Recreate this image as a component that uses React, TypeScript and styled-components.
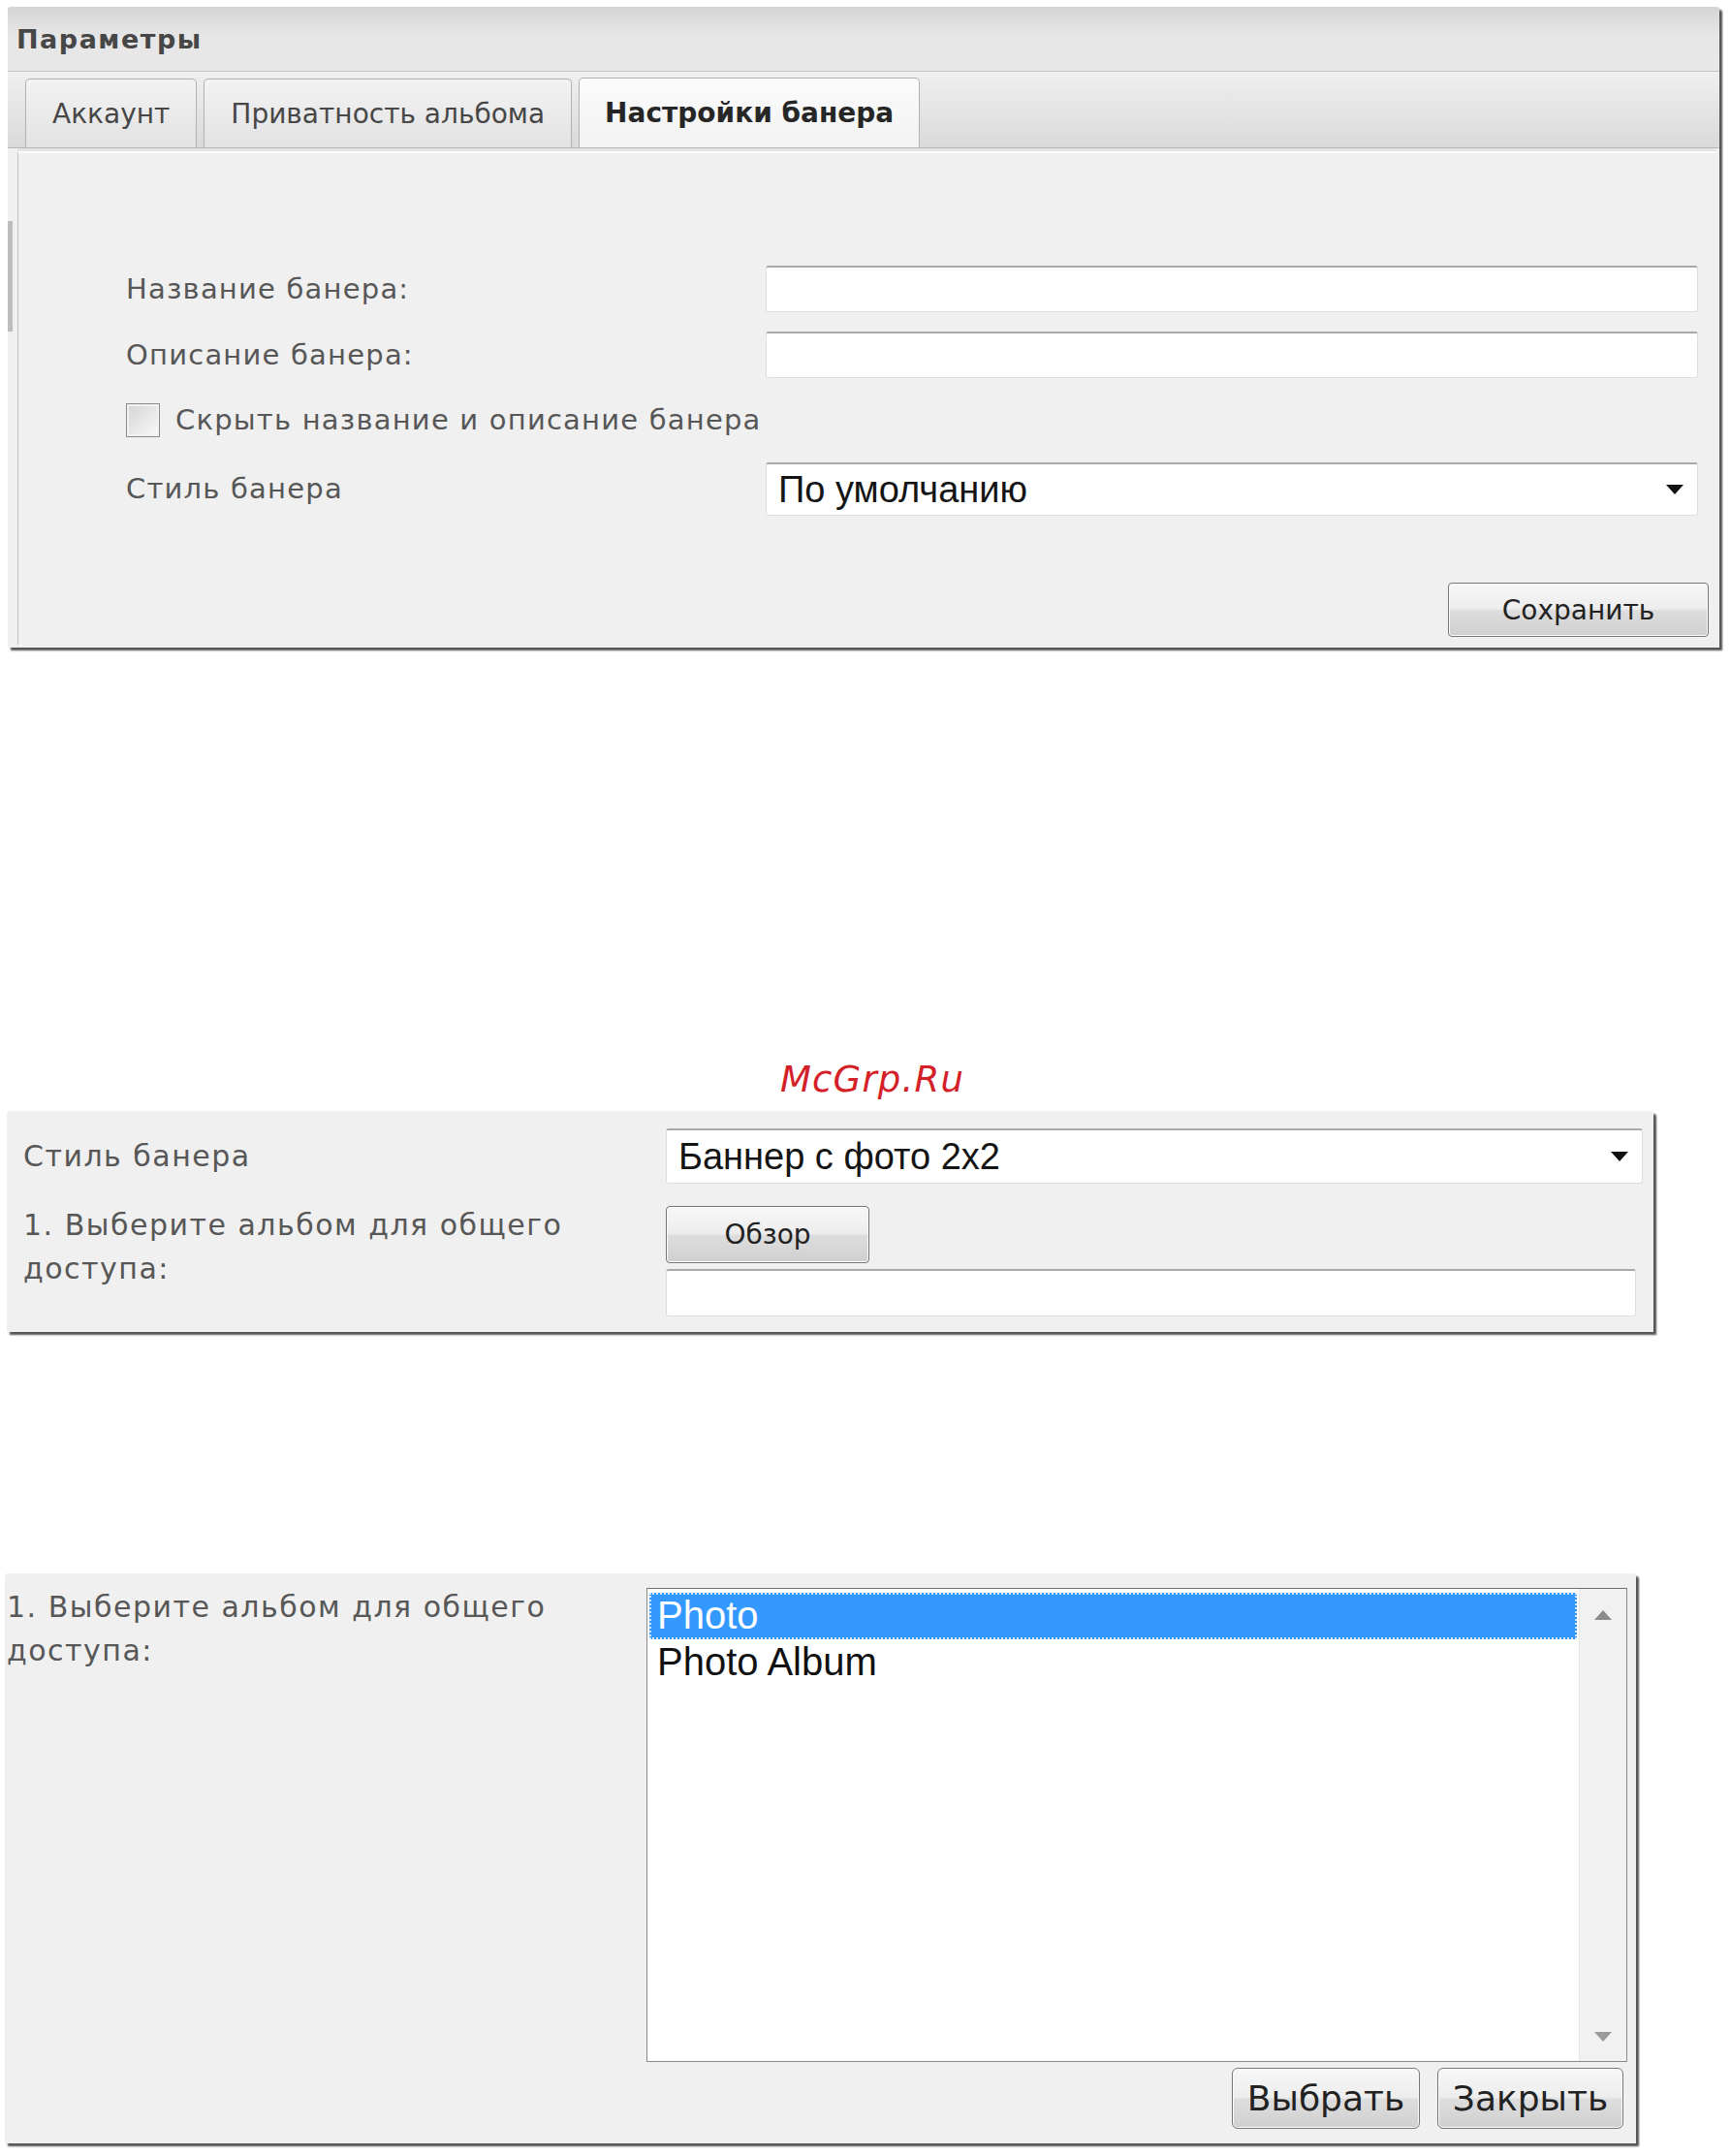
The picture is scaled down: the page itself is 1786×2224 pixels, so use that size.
import React from 'react';
import styled, { createGlobalStyle } from 'styled-components';

const GlobalStyle = createGlobalStyle`
  body {
    margin: 0;
    background: #fff;
    font-family: "DejaVu Sans", "Noto Sans", sans-serif;
  }
`;

const Page = styled.div`
  width: 1786px;
  min-height: 2224px;
  display: flex;
  flex-direction: column;
`;

const Window = styled.section<{ $left: number; $top: number; $width: number; $height: number }>`
  margin-left: ${(p) => p.$left}px;
  margin-top: ${(p) => p.$top}px;
  width: ${(p) => p.$width}px;
  height: ${(p) => p.$height}px;
  box-sizing: border-box;
  background: #f0f0f0;
  border-radius: 3px 3px 0 0;
  box-shadow: 3px 3px 2px rgba(40, 40, 40, 0.8);
  display: flex;
  flex-direction: column;
`;

/* ---------- panel 1: header + tabs ---------- */

const Header = styled.div`
  height: 67px;
  box-sizing: border-box;
  padding-left: 9px;
  display: flex;
  align-items: center;
  background: linear-gradient(#d5d5d5, #e6e6e6 45%, #e8e8e8);
  border-bottom: 1px solid #c4c4c4;
  border-radius: 3px 3px 0 0;
  font-size: 27px;
  font-weight: bold;
  letter-spacing: 1.5px;
  color: #474747;
`;

const TabStrip = styled.div`
  height: 79px;
  box-sizing: border-box;
  padding-left: 18px;
  display: flex;
  align-items: flex-end;
  gap: 7px;
  background: linear-gradient(#efefef, #dadada);
  border-bottom: 1px solid #b6b6b6;
`;

const Tab = styled.div<{ $active?: boolean }>`
  height: ${(p) => (p.$active ? 72 : 71)}px;
  box-sizing: border-box;
  padding: 0 ${(p) => (p.$active ? 26 : 27)}px;
  display: flex;
  align-items: center;
  border: 1px solid #b2b2b2;
  border-bottom: none;
  border-radius: 5px 5px 0 0;
  background: ${(p) =>
    p.$active ? 'linear-gradient(#fbfbfb, #f2f2f2)' : 'linear-gradient(#f3f3f3, #e2e2e2)'};
  font-size: 28px;
  font-weight: ${(p) => (p.$active ? 'bold' : 'normal')};
  color: ${(p) => (p.$active ? '#262626' : '#474747')};
`;

const TabBody = styled.div`
  position: relative;
  flex: 1;
  margin: 3px 3px 3px 10px;
  border-left: 1px solid #c2c2c2;
  border-top: 2px solid #fbfbfb;
  box-shadow: 0 -3px 0 #e4e4e4;
  padding: 116px 0 0 111px;
  display: flex;
  flex-direction: column;

  &::before {
    content: '';
    position: absolute;
    left: -11px;
    top: 70px;
    width: 5px;
    height: 114px;
    background: #bdbdbd;
  }
`;

const FormRow = styled.div<{ $height: number; $gap?: number }>`
  display: grid;
  grid-template-columns: 660px 962px;
  align-items: center;
  height: ${(p) => p.$height}px;
  margin-top: ${(p) => p.$gap ?? 0}px;
`;

const Label = styled.div<{ $size?: number }>`
  font-size: ${(p) => p.$size ?? 29}px;
  letter-spacing: ${(p) => (p.$size ? 1.5 : 1.2)}px;
  line-height: 45px;
  color: #575757;
`;

const TextField = styled.div<{ $height: number; $width?: number }>`
  height: ${(p) => p.$height}px;
  width: ${(p) => (p.$width ? `${p.$width}px` : 'auto')};
  box-sizing: border-box;
  background: #fff;
  border: 1px solid #dedede;
  border-top: 2px solid #a9a9a9;
  border-radius: 3px;
`;

const Select = styled.div<{ $height: number }>`
  height: ${(p) => p.$height}px;
  box-sizing: border-box;
  padding: 0 14px 0 12px;
  display: flex;
  align-items: center;
  justify-content: space-between;
  background: #fff;
  border: 1px solid #dedede;
  border-top: 2px solid #a9a9a9;
  border-radius: 3px;
  font-family: "Liberation Sans", Arial, sans-serif;
  font-size: 38px;
  color: #141414;
`;

const CheckRow = styled.label`
  display: flex;
  align-items: center;
  gap: 16px;
  height: 46px;
  margin-top: 20px;
`;

const CheckBox = styled.span`
  width: 35px;
  height: 35px;
  box-sizing: border-box;
  border: 1px solid #8a8a8a;
  background: linear-gradient(135deg, #d4d4d4, #f9f9f9);
  box-shadow: inset 0 0 0 2px #f2f2f2;
`;

const ButtonBar = styled.div<{ $gap: number }>`
  display: flex;
  justify-content: flex-end;
  gap: ${(p) => p.$gap}px;
`;

const Button = styled.div<{ $width: number; $height: number; $size: number; $radius?: number }>`
  width: ${(p) => p.$width}px;
  height: ${(p) => p.$height}px;
  box-sizing: border-box;
  display: flex;
  align-items: center;
  justify-content: center;
  border: 1px solid #777;
  border-radius: ${(p) => p.$radius ?? 4}px;
  background: linear-gradient(#f7f7f7 0%, #ededed 48%, #dddddd 52%, #d0d0d0 100%);
  box-shadow: inset 0 0 0 1px #fbfbfb;
  font-size: ${(p) => p.$size}px;
  color: #222;
`;

const SaveBar = styled(ButtonBar)`
  margin-top: 69px;
  padding-right: 8px;
`;

/* ---------- watermark ---------- */

const Watermark = styled.div`
  margin-top: 422px;
  height: 48px;
  line-height: 48px;
  padding-left: 14px;
  text-align: center;
  font-style: italic;
  font-size: 37px;
  letter-spacing: 1.2px;
  color: #d42027;
`;

/* ---------- panel 2 ---------- */

const StyleGrid = styled.div`
  display: grid;
  grid-template-columns: 663px 1008px;
  padding: 18px 0 0 17px;
  align-items: start;
`;

const Cell = styled.div<{ $gap?: number; $top?: number; $height?: number }>`
  align-self: start;
  display: flex;
  flex-direction: column;
  align-items: flex-start;
  justify-content: center;
  gap: ${(p) => p.$gap ?? 0}px;
  margin-top: ${(p) => p.$top ?? 0}px;
  height: ${(p) => (p.$height ? `${p.$height}px` : 'auto')};
`;

/* ---------- panel 3 ---------- */

const PickGrid = styled.div`
  display: grid;
  grid-template-columns: 660px 1012px;
  padding: 15px 0 0 2px;
`;

const ListBox = styled.div`
  height: 489px;
  box-sizing: border-box;
  display: flex;
  background: #fff;
  border: 1px solid #8a8a8a;
  border-top-color: #6e6e6e;
`;

const Items = styled.div`
  flex: 1;
  padding: 4px 2px 0 2px;
  font-family: "Liberation Sans", Arial, sans-serif;
  font-size: 40px;
`;

const Item = styled.div<{ $selected?: boolean }>`
  height: 48px;
  line-height: 46px;
  padding-left: 8px;
  box-sizing: border-box;
  color: ${(p) => (p.$selected ? '#fff' : '#111')};
  background: ${(p) => (p.$selected ? '#3399ff' : 'transparent')};
  outline: ${(p) => (p.$selected ? '2px dotted #cfe4ff' : 'none')};
  outline-offset: -2px;
`;

const ScrollTrack = styled.div`
  width: 48px;
  display: flex;
  flex-direction: column;
  align-items: center;
  justify-content: space-between;
  padding: 22px 0 20px;
  background: #f1f1f1;
  border-left: 1px solid #e6e6e6;
`;

const PickButtons = styled(ButtonBar)`
  margin-top: 6px;
  padding-right: 4px;
`;

const Arrow = ({ up, color }: { up?: boolean; color: string }) => (
  <svg width="18" height="10" viewBox="0 0 18 10">
    <polygon points={up ? '0,10 18,10 9,0' : '0,0 18,0 9,10'} fill={color} />
  </svg>
);

const App = () => {
  return (
    <Page>
      <GlobalStyle />

      <Window $left={8} $top={7} $width={1766} $height={661}>
        <Header>Параметры</Header>
        <TabStrip>
          <Tab>Аккаунт</Tab>
          <Tab>Приватность альбома</Tab>
          <Tab $active>Настройки банера</Tab>
        </TabStrip>
        <TabBody>
          <FormRow $height={48}>
            <Label>Название банера:</Label>
            <TextField $height={48} />
          </FormRow>
          <FormRow $height={48} $gap={20}>
            <Label>Описание банера:</Label>
            <TextField $height={48} />
          </FormRow>
          <CheckRow>
            <CheckBox />
            <Label>Скрыть название и описание банера</Label>
          </CheckRow>
          <FormRow $height={55} $gap={21}>
            <Label>Стиль банера</Label>
            <Select $height={55}>
              <span>По умолчанию</span>
              <Arrow color="#111" />
            </Select>
          </FormRow>
          <SaveBar $gap={0}>
            <Button $width={269} $height={56} $size={28}>
              Сохранить
            </Button>
          </SaveBar>
        </TabBody>
      </Window>

      <Watermark>McGrp.Ru</Watermark>

      <Window $left={7} $top={8} $width={1699} $height={228}>
        <StyleGrid>
          <Cell $height={57}>
            <Label $size={30}>Стиль банера</Label>
          </Cell>
          <Select $height={57}>
            <span>Баннер с фото 2x2</span>
            <Arrow color="#111" />
          </Select>
          <Cell $top={20}>
            <Label $size={30}>
              1. Выберите альбом для общего
              <br />
              доступа:
            </Label>
          </Cell>
          <Cell $gap={6} $top={23}>
            <Button $width={210} $height={59} $size={28}>
              Обзор
            </Button>
            <TextField $height={49} $width={1001} />
          </Cell>
        </StyleGrid>
      </Window>

      <Window $left={5} $top={249} $width={1683} $height={588}>
        <PickGrid>
          <Cell $top={-3}>
            <Label $size={30}>
              1. Выберите альбом для общего
              <br />
              доступа:
            </Label>
          </Cell>
          <div>
            <ListBox>
              <Items>
                <Item $selected>Photo</Item>
                <Item>Photo Album</Item>
              </Items>
              <ScrollTrack>
                <Arrow up color="#8a8a8a" />
                <Arrow color="#9a9a9a" />
              </ScrollTrack>
            </ListBox>
            <PickButtons $gap={18}>
              <Button $width={194} $height={63} $size={36} $radius={6}>
                Выбрать
              </Button>
              <Button $width={192} $height={63} $size={36} $radius={6}>
                Закрыть
              </Button>
            </PickButtons>
          </div>
        </PickGrid>
      </Window>
    </Page>
  );
};

export default App;
